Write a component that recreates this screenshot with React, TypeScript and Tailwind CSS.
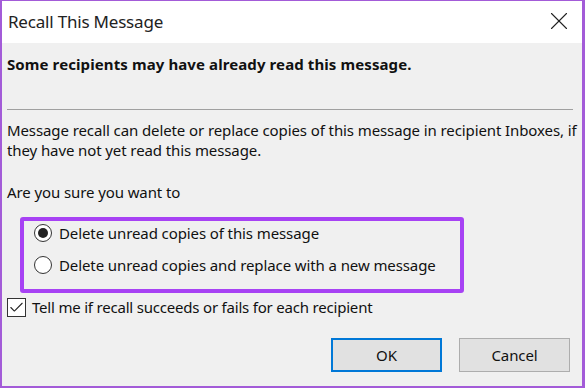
import { X, Check } from "lucide-react";

const font = { fontFamily: '"Noto Sans", "Open Sans", sans-serif' };

function Radio({ checked, label }: { checked?: boolean; label: string }) {
  return (
    <div className="flex items-center h-[32px]">
      <span className="w-[18px] h-[18px] rounded-full border border-[#333] bg-white flex items-center justify-center mr-[7px]">
        {checked && <span className="w-[10px] h-[10px] rounded-full bg-[#222]" />}
      </span>
      <span>{label}</span>
    </div>
  );
}

export default function App() {
  return (
    <div
      className="w-[585px] h-[388px] flex flex-col border-l-2 border-t border-r-[3px] border-b-2 border-[#a35bd8] text-[15px] text-[#111] overflow-hidden"
      style={font}
    >
      {/* Title bar */}
      <div className="h-[42px] bg-white flex items-center justify-between pl-[6px] pr-[8px] shrink-0">
        <span className="text-[17px] text-[#222] tracking-[-0.2px]">Recall This Message</span>
        <X className="w-[30px] h-[30px] text-[#222] -mt-[2px]" strokeWidth={0.9} />
      </div>

      <div className="flex-1 bg-[#f0f0f0] flex flex-col pl-[5px] pr-[5px] tracking-[-0.1px]">
        <div className="font-bold text-[15px] mt-[11px] leading-[20px] tracking-[0.1px]">
          Some recipients may have already read this message.
        </div>

        <div className="h-px bg-[#a0a0a0] mt-[35px] mb-[10px] mr-[4px]" />

        <p className="leading-[20px]">
          Message recall can delete or replace copies of this message in recipient Inboxes, if
          they have not yet read this message.
        </p>

        <p className="mt-[22px] leading-[20px]">Are you sure you want to</p>

        <div className="ml-[13px] mt-[15px] w-[444px] h-[76px] border-4 border-[#a742f4] rounded-[3px] pl-[10px]">
          <div className="-mt-[4px]">
            <Radio checked label="Delete unread copies of this message" />
            <Radio label="Delete unread copies and replace with a new message" />
          </div>
        </div>

        <div className="flex items-center mt-[5px] h-[19px]">
          <span className="w-[19px] h-[19px] border border-[#333] bg-white flex items-center justify-center mr-[6px]">
            <Check className="w-[17px] h-[17px] text-[#222]" strokeWidth={1.5} />
          </span>
          <span className="tracking-[-0.2px]">Tell me if recall succeeds or fails for each recipient</span>
        </div>

        <div className="flex justify-end gap-[17px] mt-[21px] pr-[7px]">
          <button className="w-[111px] h-[34px] bg-[#e1e1e1] border-2 border-[#0078d7] text-[15px]">OK</button>
          <button className="w-[111px] h-[34px] bg-[#e1e1e1] border border-[#adadad] text-[15px]">Cancel</button>
        </div>
      </div>
    </div>
  );
}
